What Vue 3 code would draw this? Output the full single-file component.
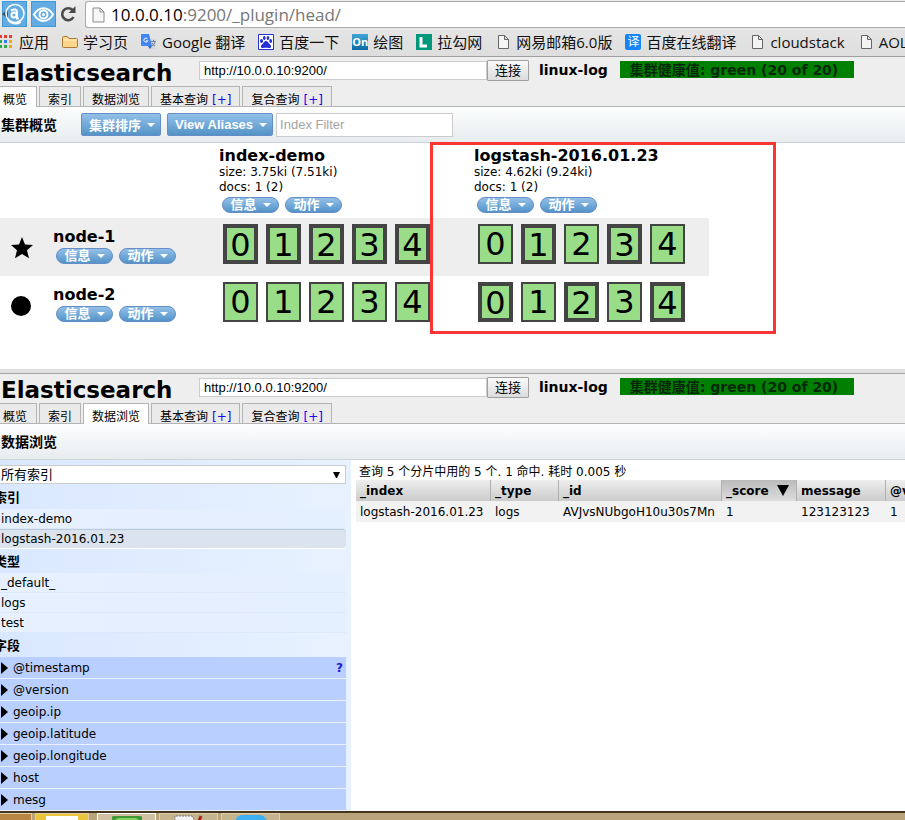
<script setup>
import { ref } from 'vue'

const bookmarks = [
  { icon: 'apps', label: '应用' },
  { icon: 'folder', label: '学习页' },
  { icon: 'translate', label: 'Google 翻译' },
  { icon: 'paw', label: '百度一下' },
  { icon: 'on', label: '绘图' },
  { icon: 'lagou', label: '拉勾网' },
  { icon: 'page', label: '网易邮箱6.0版' },
  { icon: 'yi', label: '百度在线翻译' },
  { icon: 'page', label: 'cloudstack' },
  { icon: 'page', label: 'AOL' }
]

const tabs = [
  { label: '概览' },
  { label: '索引' },
  { label: '数据浏览' },
  { label: '基本查询', add: true },
  { label: '复合查询', add: true }
]

const panels = [
  { id: 'overview', active: 0, title: '集群概览' },
  { id: 'browser', active: 2, title: '数据浏览' }
]

const indices = [
  { name: 'index-demo', size: '3.75ki (7.51ki)', docs: '1 (2)' },
  { name: 'logstash-2016.01.23', size: '4.62ki (9.24ki)', docs: '1 (2)' }
]

// Each inner list holds the shard numbers that are primary on that node.
const nodes = [
  { name: 'node-1', master: true, primaries: [[0, 1, 2, 3, 4], [1, 3]] },
  { name: 'node-2', master: false, primaries: [[], [0, 2, 4]] }
]
const shards = [0, 1, 2, 3, 4]

const indexList = ['index-demo', 'logstash-2016.01.23']
const typeList = ['_default_', 'logs', 'test']
const fields = ['@timestamp', '@version', 'geoip.ip', 'geoip.latitude', 'geoip.longitude', 'host', 'mesg']
const selected = ref('logstash-2016.01.23')

const columns = ['_index', '_type', '_id', '_score', 'message', '@version']
const rows = [['logstash-2016.01.23', 'logs', 'AVJvsNUbgoH10u30s7Mn', '1', '123123123', '1']]
</script>

<template>
  <div class="screen">
    <header class="chrome">
      <div class="nav">
        <button class="nav-btn" aria-label="后退">
          <svg width="25" height="25" viewBox="0 0 25 25">
            <path d="M0 12l6-5v10z" fill="#36586f" />
            <circle cx="13" cy="11.500" r="9" fill="none" stroke="#fff" stroke-width="1.500" />
            <path d="M6 18c3 4 8 5 13 2" fill="none" stroke="#fff" stroke-width="1.500" />
            <circle cx="12" cy="13" r="2.500" fill="none" stroke="#fff" stroke-width="2" />
            <path d="M9 8.500c4-2 6-1 6 1.500v6.500h2" fill="none" stroke="#fff" stroke-width="2" />
          </svg>
        </button>
        <button class="nav-btn" aria-label="前进">
          <svg width="25" height="25" viewBox="0 0 25 25">
            <path d="M3 12.500C8 4 17 4 22 12.500C17 21 8 21 3 12.500z" fill="none" stroke="#fff" stroke-width="2" />
            <circle cx="12.500" cy="12.500" r="4" fill="none" stroke="#fff" stroke-width="2" />
            <circle cx="12.500" cy="12.500" r="1.500" fill="#fff" />
          </svg>
        </button>
        <button class="reload" aria-label="刷新">
          <svg width="18" height="18" viewBox="0 0 18 18">
            <path d="M12.500 5A6 6 0 1 0 13.500 12" fill="none" stroke="#4b4b4b" stroke-width="2.600" />
            <path d="M15.500 1v7h-7z" fill="#4b4b4b" />
          </svg>
        </button>
        <div class="address">
          <svg width="13" height="16" viewBox="0 0 13 16">
            <path d="M1 1h7l4 4v10H1z M8 1v4h4" fill="#f7f7f7" stroke="#8a8a8a" />
          </svg>
          <span class="url">10.0.0.10<span class="path">:9200/_plugin/head/</span></span>
        </div>
      </div>
      <nav class="bookmarks">
        <a v-for="b in bookmarks" :key="b.label" href="#" class="bookmark">
          <svg v-if="b.icon === 'apps'" width="14" height="16" viewBox="0 0 14 16">
            <path d="M0 1h2v3H0zM4 1h3v3H4zM9 1h3v3H9z" fill="#e53935" />
            <path d="M0 6h2v3H0z" fill="#2fa84f" /><path d="M4 6h3v3H4z" fill="#2c83f0" /><path d="M9 6h3v3H9z" fill="#f3a712" />
            <path d="M0 11h2v3H0zM4 11h3v3H4z" fill="#2fa84f" /><path d="M9 11h3v3H9z" fill="#f3a712" />
          </svg>
          <svg v-else-if="b.icon === 'folder'" width="16" height="16" viewBox="0 0 16 16">
            <path d="M.5 3.500q0-1 1-1h4l1.500 2h7.500q1 0 1 1v7q0 1-1 1h-13q-1 0-1-1z" fill="#fbd58b" stroke="#ac7a35" />
            <path d="M1.500 6h13" stroke="#fff0c9" />
          </svg>
          <svg v-else-if="b.icon === 'translate'" width="16" height="16" viewBox="0 0 16 16">
            <path d="M7 5h8v10H9z" fill="#d5d8dd" />
            <path d="M1 0h7l3 12H1q-1 0-1-1V1q0-1 1-1z" fill="#4285f4" />
            <path d="M7 12h4l-2 3z" fill="#2b60c4" />
            <path d="M6.500 4.800a2 2 0 1 0 .3 2H5" fill="none" stroke="#fff" />
            <path d="M10 7.500h5M12.500 6v1.500M14 8q-1 3-3 4M11 9q1 2 3 3" fill="none" stroke="#73808f" />
          </svg>
          <svg v-else-if="b.icon === 'paw'" width="16" height="16" viewBox="0 0 16 16">
            <path d="M.5.5h15v15H.5z" fill="#fff" stroke="#2530d8" />
            <g fill="#2530d8">
              <ellipse cx="3.500" cy="7" rx="1.500" ry="2" /><ellipse cx="6.300" cy="4" rx="1.400" ry="2" />
              <ellipse cx="10" cy="4" rx="1.400" ry="2" /><ellipse cx="12.700" cy="7" rx="1.400" ry="2" />
              <path d="M8 7c2 0 2 2 4 3.500s1 4-1 3.500-4-.3-6 0-3-2-1-3.500S6 7 8 7z" />
            </g>
          </svg>
          <span v-else-if="b.icon === 'on'" class="badge on">On</span>
          <svg v-else-if="b.icon === 'lagou'" width="16" height="16" viewBox="0 0 16 16">
            <path d="M0 0h16v16H0z" fill="#00987a" /><path d="M5 3v9h6" fill="none" stroke="#fff" stroke-width="3" />
          </svg>
          <span v-else-if="b.icon === 'yi'" class="badge yi">译</span>
          <svg v-else width="16" height="16" viewBox="0 0 16 16">
            <path d="M3.500 1.500h6l4 4v9h-10z M9.500 1.500v4h4" fill="#f4f4f4" stroke="#666" />
          </svg>
          <span>{{ b.label }}</span>
        </a>
      </nav>
    </header>

    <section v-for="p in panels" :key="p.id" class="panel">
      <header class="es-head">
        <div class="es-top">
          <h1>Elasticsearch</h1>
          <form class="connect" @submit.prevent>
            <input type="text" value="http://10.0.0.10:9200/" aria-label="连接地址" />
            <button type="submit">连接</button>
          </form>
          <strong class="cluster">linux-log</strong>
          <strong class="health">集群健康值: green (20 of 20)</strong>
        </div>
        <nav class="tabs">
          <div v-for="(t, i) in tabs" :key="t.label" class="tab" :class="{ active: i === p.active }">
            <a href="#">{{ t.label }}</a>
            <a v-if="t.add" href="#" class="add">[+]</a>
          </div>
        </nav>
      </header>

      <div class="toolbar">
        <h2>{{ p.title }}</h2>
        <template v-if="p.id === 'overview'">
          <button class="tool">集群排序<i class="caret"></i></button>
          <button class="tool">View Aliases<i class="caret"></i></button>
          <input type="text" placeholder="Index Filter" aria-label="Index Filter" />
        </template>
      </div>

      <div v-if="p.id === 'overview'" class="cluster-view">
        <table class="grid">
          <thead>
            <tr>
              <td class="node-col"></td>
              <th v-for="ix in indices" :key="ix.name" class="index-col">
                <h3>{{ ix.name }}</h3>
                <p>size: {{ ix.size }}</p>
                <p>docs: {{ ix.docs }}</p>
                <div class="pills">
                  <button class="pill">信息<i class="caret"></i></button>
                  <button class="pill">动作<i class="caret"></i></button>
                </div>
              </th>
            </tr>
          </thead>
          <tbody>
            <tr v-for="n in nodes" :key="n.name">
              <th class="node-col">
                <div class="node">
                  <svg width="22" height="22" viewBox="0 0 22 22">
                    <path v-if="n.master" d="M11 0l3 7.500 8 .5-6 5.200 2 8L11 17l-7 4.200 2-8L0 8l8-.5z" />
                    <circle v-else cx="10" cy="11" r="10" />
                  </svg>
                  <div>
                    <h3>{{ n.name }}</h3>
                    <div class="pills">
                      <button class="pill">信息<i class="caret"></i></button>
                      <button class="pill">动作<i class="caret"></i></button>
                    </div>
                  </div>
                </div>
              </th>
              <td v-for="(pr, i) in n.primaries" :key="i">
                <div class="shards">
                  <button v-for="s in shards" :key="s" class="shard" :class="{ primary: pr.includes(s) }">{{ s }}</button>
                </div>
              </td>
            </tr>
          </tbody>
        </table>
        <div class="marker"></div>
      </div>

      <div v-else class="data-view">
        <aside>
          <div class="select-wrap">
            <select aria-label="索引"><option>所有索引</option></select>
            <svg width="7" height="8" viewBox="0 0 7 8"><path d="M0 1h7L4 7H3z" /></svg>
          </div>
          <h4>索引</h4>
          <ul class="list">
            <li v-for="x in indexList" :key="x" :class="{ selected: x === selected }" @click="selected = x">{{ x }}</li>
          </ul>
          <h4>类型</h4>
          <ul class="list">
            <li v-for="x in typeList" :key="x">{{ x }}</li>
          </ul>
          <h4>字段</h4>
          <ul class="fields">
            <li v-for="(f, i) in fields" :key="f">
              <svg width="8" height="12" viewBox="0 0 8 12"><path d="M1 0l7 6-7 6z" /></svg>
              <span>{{ f }}</span>
              <a v-if="i === 0" href="#" class="help">?</a>
            </li>
          </ul>
        </aside>
        <div class="results">
          <p>查询 5 个分片中用的 5 个. 1 命中. 耗时 0.005 秒</p>
          <table class="hits">
            <thead>
              <tr>
                <th v-for="c in columns" :key="c" :class="'c' + c">
                  {{ c }}<svg v-if="c === '_score'" width="12" height="11" viewBox="0 0 12 11"><path d="M0 0h12L6 11z" /></svg>
                </th>
              </tr>
            </thead>
            <tbody>
              <tr v-for="(r, i) in rows" :key="i">
                <td v-for="(v, j) in r" :key="j">{{ v }}</td>
              </tr>
            </tbody>
          </table>
        </div>
      </div>
    </section>

    <footer class="taskbar">
      <div class="task first"></div>
      <div class="task yellow"><span></span></div>
      <div class="task light"><svg width="30" height="6" viewBox="0 0 30 6"><path d="M0 6V3q0-1 2-1h26q2 0 2 1v3z" fill="#3f9a35" /><path d="M3 6l3-2h18l3 2z" fill="#8ed25e" /></svg></div>
      <div class="task"><svg width="32" height="7" viewBox="0 0 32 7"><path d="M2 7V2h17l3 5z" fill="#f3f3f3" stroke="#777" stroke-dasharray="2 1" /><path d="M26 7l2-5" stroke="#a22" stroke-width="3" /></svg></div>
      <div class="task"><svg width="32" height="7" viewBox="0 0 32 7"><path d="M0 7q2-6 8-6h16q6 0 8 6z" fill="#3eb1f5" /></svg></div>
    </footer>
  </div>
</template>

<style>
body {
  margin: 0;
  background: #fff;
}
</style>

<style scoped>
* {
  box-sizing: border-box;
}
.screen {
  overflow: hidden;
  font: 12px/15px "DejaVu Sans", "Noto Sans CJK SC", sans-serif;
  color: #000;
}
h1, h2, h3, h4, p, ul {
  margin: 0;
  padding: 0;
}
ul {
  list-style: none;
}
a {
  color: inherit;
  text-decoration: none;
}
button, input, select {
  margin: 0;
  font-family: "Liberation Sans", "Noto Sans CJK SC", sans-serif;
}
svg {
  display: block;
  flex: none;
}

/* Browser chrome */
.chrome {
  height: 57px;
  border-bottom: 1px solid #a0a0a0;
  background: linear-gradient(#ececec, #dedede);
  font-family: "Open Sans", "Noto Sans CJK SC", sans-serif;
}
.nav {
  display: flex;
  align-items: flex-start;
  gap: 4px;
  height: 28px;
  padding: 1px 0 0 2px;
}
.nav-btn {
  flex: none;
  width: 25px;
  height: 26px;
  padding: 0;
  border: 1px solid #3f98d8;
  background: #62abe3;
}
.nav-btn svg {
  margin: -1px;
}
.reload {
  padding: 4px 0 0;
  border: 0;
  background: none;
}
.address {
  flex: 1;
  display: flex;
  align-items: center;
  gap: 6px;
  height: 27px;
  margin-left: 3px;
  padding-left: 6px;
  border: 1px solid #aaa;
  border-right: 0;
  border-radius: 3px 0 0 3px;
  background: #fff;
}
.url {
  font-size: 17px;
  line-height: 24px;
}
.path {
  color: #777;
}
.bookmarks {
  display: flex;
  gap: 13px;
  height: 28px;
  align-items: center;
  white-space: nowrap;
}
.bookmark {
  display: flex;
  align-items: center;
  gap: 5px;
  font-size: 15px;
  line-height: 20px;
  color: #111;
}
.badge {
  width: 16px;
  height: 16px;
  font-size: 12px;
  line-height: 16px;
  text-align: center;
  color: #fff;
}
.on {
  background: linear-gradient(#3fa6d5, #0b6ba3);
  font-weight: bold;
  font-size: 11px;
}
.yi {
  border-radius: 2px;
  background: #1485f5;
}

/* Shared page header */
.es-head {
  height: 50px;
  border-bottom: 1px solid #b4b4b4;
  background: #eee;
}
.es-top {
  display: flex;
  align-items: flex-start;
  height: 29px;
  padding: 3px 0 0 1px;
  white-space: nowrap;
}
h1 {
  width: 198px;
  font-size: 23px;
  line-height: 26px;
}
.connect {
  display: flex;
  align-items: center;
}
.connect input {
  width: 288px;
  height: 19px;
  padding: 0 4px;
  border: 1px solid #ccc;
  background: #fff;
  font-size: 13px;
}
.connect button {
  width: 42px;
  height: 21px;
  padding: 0;
  border: 1px solid #a0a0a0;
  border-radius: 1px;
  background: linear-gradient(#fafafa, #dcdcdc);
  font-size: 13px;
  line-height: 18px;
}
.cluster {
  margin: 1px 0 0 10px;
  font-size: 14px;
  line-height: 18px;
}
.health {
  min-width: 234px;
  height: 17px;
  margin: 1px 0 0 12px;
  padding: 0 10px;
  background: #008000;
  font-size: 14px;
  line-height: 18px;
  color: #06280a;
}
.tabs {
  display: flex;
  gap: 2px;
}
.tab {
  display: flex;
  gap: 4px;
  height: 20px;
  padding: 4px 8px 0;
  border: 1px solid #b4b4b4;
  border-bottom: 0;
  background: #eaeaea;
  line-height: 18px;
}
.tab:first-child {
  padding-left: 3px;
  border-left: 0;
  padding-right: 9px;
}
.tab.active {
  height: 21px;
  background: #fff;
}
.add {
  color: #2000f0;
}
.toolbar {
  display: flex;
  align-items: center;
  height: 36px;
  padding-left: 1px;
  border-bottom: 1px solid #ccd4d9;
  background: linear-gradient(#fdfefe, #e7ecef);
}
h2 {
  width: 80px;
  font-size: 14px;
  line-height: 20px;
}
.tool {
  display: flex;
  align-items: center;
  gap: 6px;
  height: 23px;
  margin-right: 6px;
  padding: 0 5px 0 7px;
  border: 1px solid #668dc6;
  border-radius: 2px;
  background: linear-gradient(#92c0e8, #5493c8);
  font-size: 13px;
  font-weight: bold;
  color: #fff;
}
.caret {
  border: 4px solid transparent;
  border-top-color: #fff;
  border-bottom: 0;
}
.toolbar input {
  width: 177px;
  height: 24px;
  margin-left: -3px;
  padding: 0 3px;
  border: 1px solid #ccc;
  font-size: 13px;
}
.toolbar input::placeholder {
  color: #a5a5a5;
}

/* Cluster overview */
.cluster-view {
  position: relative;
  height: 231px;
  border-bottom: 1px solid #a3a3a3;
  background: linear-gradient(#fff 226px, #e0e0e0 226px);
}
.grid {
  border-collapse: collapse;
  table-layout: fixed;
  width: 709px;
}
.grid th, .grid td {
  padding: 0;
  vertical-align: top;
  text-align: left;
  font-weight: normal;
}
.grid thead tr {
  height: 75px;
}
.grid tbody tr {
  height: 58px;
}
.grid tbody tr:first-child {
  background: #eee;
}
.grid .node-col {
  width: 219px;
}
.grid .index-col {
  width: 255px;
  padding-top: 4px;
}
.grid .index-col:last-child {
  width: 235px;
}
h3 {
  font-size: 16px;
  line-height: 18px;
}
.pills {
  display: flex;
  gap: 6px;
  padding: 2px 3px 0;
}
.pill {
  display: flex;
  align-items: center;
  justify-content: center;
  gap: 6px;
  width: 57px;
  height: 16px;
  padding: 0;
  border: 1px solid #668dc6;
  border-radius: 8px;
  background: linear-gradient(#92c0e8, #5493c8);
  font-size: 13px;
  line-height: 14px;
  font-weight: bold;
  color: #fff;
}
.node {
  display: flex;
  gap: 20px;
  padding: 10px 0 0 11px;
}
.node svg {
  margin-top: 9px;
}
.shards {
  display: flex;
  gap: 8px;
  padding: 6px 4px;
}
.shard {
  width: 35px;
  height: 40px;
  padding: 0;
  border: 2px solid #444;
  background: #99dd88;
  font: 32px/34px "DejaVu Sans", sans-serif;
}
.primary {
  border-width: 4px;
}
.marker {
  position: absolute;
  left: 430px;
  top: -1px;
  width: 346px;
  height: 192px;
  border: 3px solid #fb3434;
}

/* Data browser */
.data-view {
  display: flex;
  height: 351px;
}
aside {
  flex: none;
  width: 351px;
  padding: 5px 5px 0 0;
  overflow: hidden;
  background: linear-gradient(90deg, #dae8ff, #e8f2ff);
}
.select-wrap {
  display: flex;
  align-items: center;
  height: 19px;
  padding-right: 5px;
  border: 1px solid #ccc;
  border-left: 0;
  background: #fff;
}
select {
  flex: 1;
  height: 17px;
  padding: 0 0 0 1px;
  border: 0;
  appearance: none;
  background: #fff;
  font-size: 13px;
  line-height: 17px;
  color: #000;
}
h4 {
  height: 25px;
  font-size: 13px;
  line-height: 28px;
  text-indent: -6px;
}
.list li {
  height: 20px;
  padding-left: 1px;
  border-bottom: 1px solid #dce9fb;
  background: linear-gradient(90deg, #e7f0ff, #e4efff);
  line-height: 21px;
}
.list .selected {
  border-top: 1px solid #b9c9da;
  border-bottom-color: #fff;
  border-radius: 0 4px 4px 0;
  background: #dae3ee;
  line-height: 18px;
}
.list {
  margin-bottom: -1px;
}
.fields li {
  display: flex;
  align-items: center;
  gap: 5px;
  height: 22px;
  padding-right: 3px;
  border-bottom: 1px solid #eaf1ff;
  background: #b8cfff;
  line-height: 17px;
}
.fields span, .help {
  padding-top: 2px;
}
.help {
  margin-left: auto;
  font-weight: bold;
  color: #2318d8;
}
.results {
  flex: 1;
  min-width: 0;
  padding: 2px 0 0 5px;
  overflow: hidden;
  white-space: nowrap;
}
.results p {
  height: 18px;
  padding-left: 3px;
  line-height: 20px;
}
.hits {
  border-collapse: separate;
  border-spacing: 0;
  table-layout: fixed;
  width: 629px;
}
.hits th, .hits td {
  height: 21px;
  padding: 2px 4px 0;
  text-align: left;
}
.hits th {
  border-right: 1px solid #b0b0b0;
  background: linear-gradient(#eee, #ccc);
}
.hits td {
  background: #f2f2f2;
}
.c_index {
  width: 135px;
}
.c_type {
  width: 68px;
}
.c_id {
  width: 163px;
}
.hits .c_score {
  width: 75px;
  background: linear-gradient(#bbb, #ddd);
}
.c_score svg {
  display: inline-block;
  margin-left: 8px;
  vertical-align: -1px;
}
.cmessage {
  width: 89px;
}

/* Desktop taskbar */
.taskbar {
  display: flex;
  gap: 3px;
  height: 9px;
  border-top: 2px solid #45351c;
  background: #b9a47c;
}
.task {
  display: flex;
  justify-content: center;
  width: 59px;
  border: 1px solid #ddcfb0;
  border-bottom: 0;
  background: #c6b48f;
  overflow: hidden;
}
.first {
  width: 32px;
  border-left: 0;
  background: #b98545;
}
.yellow {
  width: 54px;
  margin-right: 5px;
  background: #e9c53c;
}
.yellow span {
  width: 32px;
  margin-top: 2px;
  background: #fff;
}
.light {
  border-color: #fff;
  background: #cfc1a2;
}
</style>
